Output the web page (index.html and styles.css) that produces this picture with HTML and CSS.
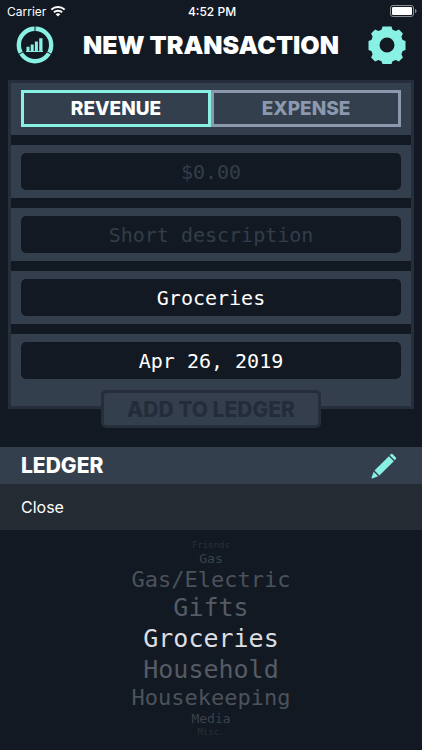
FILE: index.html
```html
<!DOCTYPE html>
<html lang="en">
<head>
    <meta charset="UTF-8">
    <meta name="viewport" content="width=device-width, initial-scale=1.0">
    <title>New Transaction</title>
    <link rel="stylesheet" href="styles.css">
</head>
<body>
    <div class="status-bar">
        <div class="carrier">
            <span>Carrier</span>
            <svg width="16" height="12" viewBox="0 0 16 12" fill="none" stroke="#fff" stroke-width="2">
                <path d="M1.3 4.6a9.6 9.6 0 0 1 13.4 0"/>
                <path d="M3.9 7.3a5.9 5.9 0 0 1 8.2 0"/>
                <path d="M8 11.6 5.7 9.3a3.3 3.3 0 0 1 4.6 0z" fill="#fff" stroke="none"/>
            </svg>
        </div>
        <time>4:52 PM</time>
        <svg class="battery" width="27" height="12" viewBox="0 0 27 12">
            <rect x="0.5" y="0.5" width="23" height="11" rx="2.5" fill="none" stroke="#8b8f94"/>
            <rect x="2" y="2" width="20" height="8" rx="1.3" fill="#fff"/>
            <path d="M25 4v4c1-.3 1.5-1 1.5-2S26 4.300 25 4z" fill="#8b8f94"/>
        </svg>
    </div>

    <header class="header">
        <button class="icon-button" type="button" aria-label="Reports">
            <svg width="38" height="38" viewBox="0 0 38 38">
                <circle cx="19" cy="19" r="16.200" fill="none" stroke="#89f1e3" stroke-width="4.400"/>
                <path d="M19 0v6M2.500 28.500l5.500-3.200M35.500 28.500l-5.500-3.200" stroke="#121922" stroke-width="1"/>
                <path d="M10.500 20.800h3v4.700h-3zM14.700 18.400h3v7.100h-3zM18.900 15.500h3v10h-3zM23.200 12.300h3.300v13.200h-3.300z" fill="#89f1e3"/>
                <path d="M10 25.500h17" stroke="#89f1e3" stroke-width="1"/>
            </svg>
        </button>
        <h1>NEW TRANSACTION</h1>
        <button class="icon-button" type="button" aria-label="Settings">
            <svg width="38" height="38" viewBox="0 0 38 38">
                <path fill="#89f1e3" fill-rule="evenodd" d="M14.500.500h9l1 3.200 3.200 1.300 3.200-1.500 4 4-1.500 3.200 1.200 3.300 2.900 1v9l-2.900 1-1.200 3.300 1.500 3.200-4 4-3.200-1.500-3.200 1.300-1 2.700h-9l-1-2.700-3.200-1.300-3.200 1.500-4-4 1.500-3.200-1.200-3.300-2.900-1v-9l2.900-1 1.200-3.300-1.500-3.200 4-4 3.200 1.500 3.200-1.300zM19 11.500a7.500 7.500 0 1 0 0 15 7.500 7.500 0 0 0 0-15z"/>
            </svg>
        </button>
    </header>

    <main>
        <form class="transaction">
            <div class="row type-row">
                <button class="type active" type="button" aria-pressed="true">REVENUE</button>
                <button class="type" type="button" aria-pressed="false">EXPENSE</button>
            </div>
            <div class="row">
                <input type="text" placeholder="$0.00" aria-label="Amount">
            </div>
            <div class="row">
                <input type="text" placeholder="Short description" aria-label="Description">
            </div>
            <div class="row">
                <input type="text" value="Groceries" aria-label="Category">
            </div>
            <div class="row last">
                <input type="text" value="Apr 26, 2019" aria-label="Date">
            </div>
        </form>
        <button class="add-button" type="button" disabled>ADD TO LEDGER</button>

        <div class="ledger">
            <h2>LEDGER</h2>
            <button class="icon-button" type="button" aria-label="Edit ledger">
                <svg width="26" height="26" viewBox="0 0 26 26" fill="#89f1e3">
                    <path d="M18.800 2.300 20 1.100q.7-.7 1.400 0l3.500 3.500q.7.700 0 1.400l-1.200 1.200z"/>
                    <path d="m17.900 3.300 4.900 4.900L8.400 22.500l-4.900-4.900z"/>
                    <path d="m2.700 18.700 4.500 4.500-6 2.300q-.8.200-.7-.7z"/>
                </svg>
            </button>
        </div>
    </main>

    <section class="picker">
        <div class="picker-bar">
            <button type="button">Close</button>
        </div>
        <ul class="wheel" role="listbox" aria-label="Category">
            <li class="edge" role="option">Friends</li>
            <li class="far" role="option">Gas</li>
            <li class="mid" role="option">Gas/Electric</li>
            <li class="near" role="option">Gifts</li>
            <li class="selected" role="option" aria-selected="true">Groceries</li>
            <li class="near" role="option">Household</li>
            <li class="mid" role="option">Housekeeping</li>
            <li class="far" role="option">Media</li>
            <li class="edge" role="option">Misc.</li>
        </ul>
    </section>
</body>
</html>
```
FILE: styles.css
```css
* {
    box-sizing: border-box;
    margin: 0;
    padding: 0;
}

body {
    background-color: #121922;
    color: #fff;
    font-family: Inter, "Open Sans", sans-serif;
}

button {
    background: none;
    border: none;
    color: inherit;
    font-family: inherit;
    cursor: pointer;
}

svg {
    display: block;
}

.status-bar {
    display: grid;
    grid-template-columns: 1fr auto 1fr;
    align-items: center;
    height: 22px;
    padding: 0 5px 0 7px;
    font-size: 12px;
}

.status-bar time {
    font-weight: 500;
}

.carrier {
    display: flex;
    align-items: center;
    gap: 4px;
}

.battery {
    justify-self: end;
}

.header {
    display: flex;
    align-items: center;
    justify-content: space-between;
    height: 46px;
    padding: 0 16px;
}

h1 {
    font-size: 25px;
    font-weight: 900;
}

/* Form */
.transaction {
    display: flex;
    flex-direction: column;
    gap: 10px;
    margin: 12px 8px 0;
    border: 3px solid #252e3a;
}

.row {
    display: flex;
    padding: 8px 10px;
    background-color: #333f4d;
}

.row.type-row {
    padding-top: 7px;
}

.row.last {
    padding-bottom: 27px;
}

.type {
    flex: 1;
    height: 37px;
    border: 3px solid #8b98ae;
    color: #8b98ae;
    font-size: 19px;
    font-weight: 800;
}

.type.active {
    border-color: #89f1e3;
    color: #fff;
}

input {
    width: 100%;
    height: 37px;
    border: none;
    border-radius: 5px;
    background-color: #121922;
    color: #fff;
    font-family: "DejaVu Sans Mono", monospace;
    font-size: 20px;
    text-align: center;
}

input::placeholder {
    color: #333d4a;
    opacity: 1;
}

.add-button {
    display: block;
    position: relative;
    height: 38px;
    margin: -19px auto 19px;
    padding: 0 23px;
    border: 3px solid #252e3a;
    border-radius: 5px;
    background-color: #333f4d;
    color: #232d39;
    font-size: 21px;
    font-weight: 800;
}

.ledger {
    display: flex;
    align-items: center;
    justify-content: space-between;
    height: 37px;
    padding: 0 25px 0 21px;
    background-color: #333f4d;
}

h2 {
    font-size: 21px;
    font-weight: 800;
}

/* Category picker */
.picker-bar {
    display: flex;
    height: 46px;
    padding: 0 21px;
    background-color: #252b33;
}

.picker-bar button {
    font-size: 16px;
}

.wheel {
    display: flex;
    flex-direction: column;
    align-items: center;
    padding-top: 10px;
    list-style: none;
    font-family: "DejaVu Sans Mono", monospace;
}

.wheel li {
    color: #555b64;
    font-size: 25px;
    line-height: 30px;
}

.wheel .selected {
    color: #dcdee1;
    line-height: 32px;
}

.wheel .mid {
    color: #4b525b;
    font-size: 22px;
    line-height: 26px;
}

.wheel .far {
    color: #3b424b;
    font-size: 13px;
    line-height: 16px;
}

.wheel .edge {
    color: #29313a;
    font-size: 9px;
    line-height: 11px;
}
```
